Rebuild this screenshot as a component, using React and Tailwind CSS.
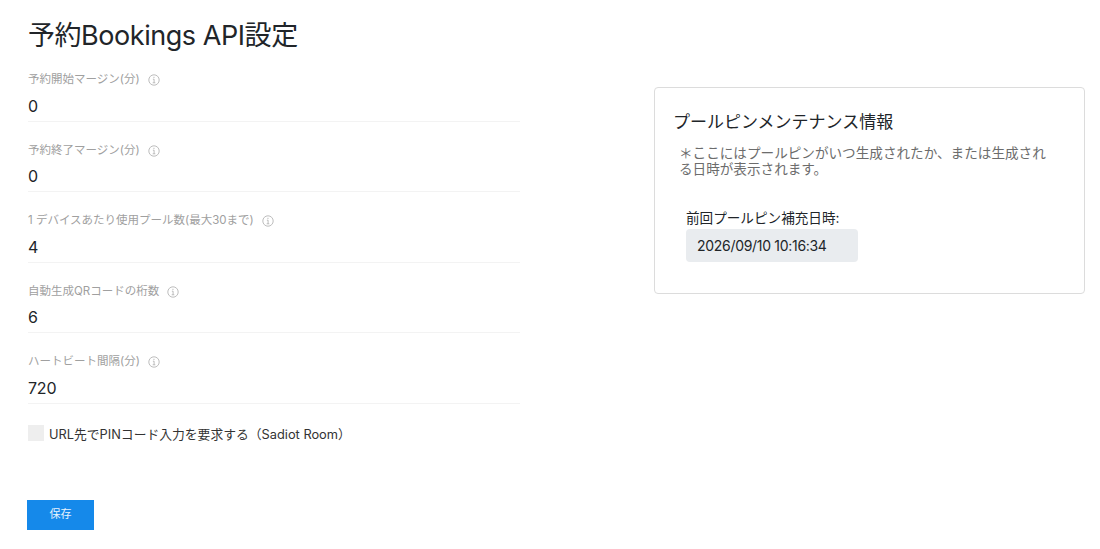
import React from 'react';

const FONT = "font-['Inter','Noto_Sans_CJK_JP',sans-serif]";

const fields = [
  { label: '予約開始マージン(分)', value: '0' },
  { label: '予約終了マージン(分)', value: '0' },
  { label: '1 デバイスあたり使用プール数(最大30まで)', value: '4' },
  { label: '自動生成QRコードの桁数', value: '6' },
  { label: 'ハートビート間隔(分)', value: '720' },
];

const InfoIcon = () => (
  <svg width="12" height="12" viewBox="0 0 12 12" fill="none" stroke="#b5b5b5" strokeWidth="0.9" className="ml-[8px] shrink-0">
    <circle cx="6" cy="6" r="5.2" />
    <path d="M4.9 5.2H6.1V8.8M4.7 8.8H7.3" />
    <path d="M5.5 3.4H6.4" strokeWidth="1.1" />
  </svg>
);

const Field = ({ label, value }) => (
  <div className="h-[70.5px] flex flex-col justify-end">
    <div className="flex items-center h-[18px] text-[11.5px] text-[#a0a0a0]">
      <span>{label}</span>
      <InfoIcon />
    </div>
    <div className="h-[32.5px] pt-[2px] flex items-center text-[16px] tracking-[-0.2px] text-[#212529] border-b border-[#f3f3f3]">
      {value}
    </div>
  </div>
);

export default function App() {
  return (
    <div className={`${FONT} w-[1100px] h-[549px] bg-white overflow-hidden flex pl-[28px]`}>
      {/* Left form */}
      <div className="w-[492px] shrink-0">
        <h1 className="text-[27px] leading-[32px] mt-[20px] text-[#212529] font-normal tracking-[-0.45px]">予約Bookings API設定</h1>
        <div className="mt-[-1px]">
          {fields.map((f) => (
            <Field key={f.label} label={f.label} value={f.value} />
          ))}
        </div>
        <div className="flex items-start mt-[21px]">
          <div className="w-4 h-4 bg-[#eeeeee]" />
          <span className="ml-[5px] text-[12.8px] leading-[20px] text-[#333333]">URL先でPINコード入力を要求する（Sadiot Room）</span>
        </div>
        <button className="mt-[55px] w-[67px] h-[30px] bg-[#1589ea] text-[#e8f3fd] text-[11px] block -ml-[1px]">保存</button>
      </div>

      {/* Pool PIN card */}
      <div className="ml-[134px] mt-[87px] w-[431px] h-[207px] border border-[#dcdcdc] rounded-[4px] pl-[18px] pt-[23px]">
        <h2 className="text-[17px] leading-[22px] text-[#212529] font-normal">プールピンメンテナンス情報</h2>
        <p className="mt-[12px] ml-[6px] w-[372px] text-[13.6px] leading-[16px] text-[#6c6c6c]">＊ここにはプールピンがいつ生成されたか、または生成される日時が表示されます。</p>
        <div className="mt-[33px] ml-[13px]">
          <div className="text-[13.6px] leading-[16px] text-[#212529]">前回プールピン補充日時:</div>
          <div className="mt-[3px] w-[172px] h-[33px] bg-[#e9ecef] rounded-[4px] flex items-center pl-[11px] text-[14px] tracking-[-0.3px] text-[#212529]">2026/09/10 10:16:34</div>
        </div>
      </div>
    </div>
  );
}
